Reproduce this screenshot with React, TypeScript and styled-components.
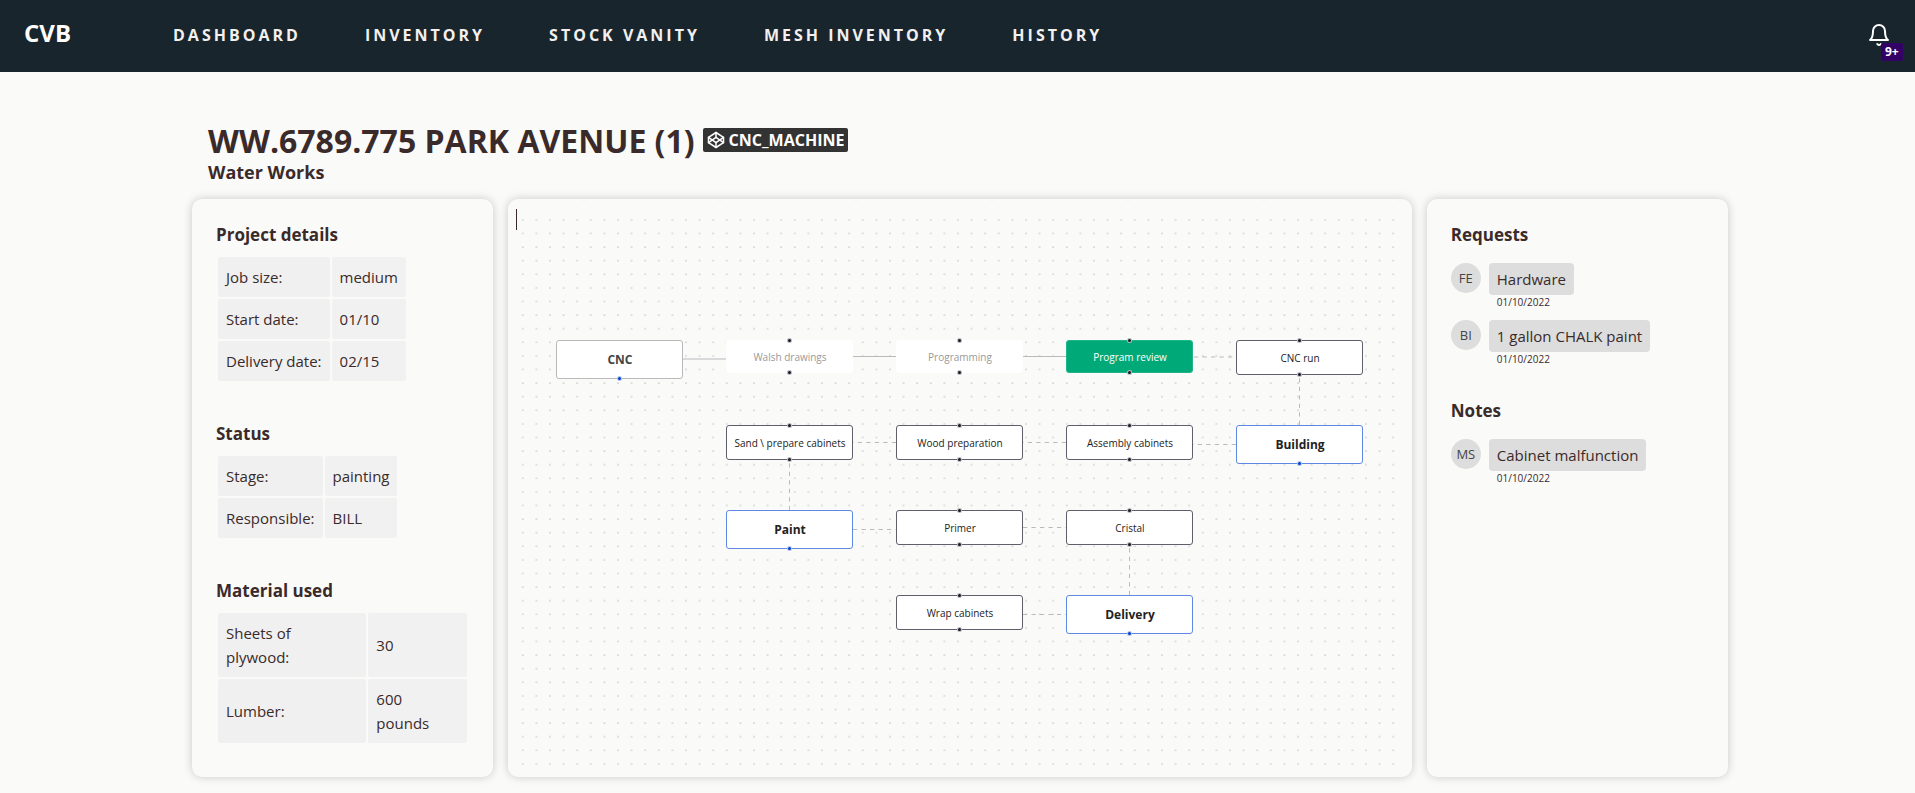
import React from "react";
import styled, { createGlobalStyle, css } from "styled-components";
import { FiBell, FiCodepen } from "react-icons/fi";

const GlobalStyle = createGlobalStyle`
  *, *::before, *::after { box-sizing: border-box; }
  body {
    margin: 0;
    background: #fafaf8;
    color: #3a2a2a;
    font-family: "Segoe UI", "Open Sans", "Noto Sans", sans-serif;
    font-size: 15px;
    line-height: 24px;
  }
`;

const NavBar = styled.header`
  display: flex;
  align-items: center;
  height: 72px;
  padding: 0 24px 2px;
  background: #18252c;
  color: #fff;
`;

const Brand = styled.a`
  width: 149px;
  padding-bottom: 4px;
  color: inherit;
  font-size: 24px;
  font-weight: 700;
  line-height: 32px;
  text-decoration: none;
`;

const NavLinks = styled.nav`
  display: flex;
  flex: 1;
  gap: 64px;
`;

const NavLink = styled.a`
  color: #f3f0ef;
  font-size: 16px;
  font-weight: 700;
  letter-spacing: 3px;
  text-decoration: none;
  text-transform: uppercase;
  white-space: nowrap;
`;

const BellButton = styled.button`
  position: relative;
  display: flex;
  padding: 0;
  border: 0;
  background: none;
  color: #fff;
  cursor: pointer;
`;

const BellCount = styled.span`
  position: absolute;
  top: 20px;
  left: 14px;
  padding: 0 4px;
  border-radius: 2px;
  background: #330066;
  font-family: "Segoe UI", "Open Sans", "Noto Sans", sans-serif;
  font-size: 12px;
  font-weight: 700;
  line-height: 18px;
`;

const Page = styled.main`
  padding: 48px 187px 14px 192px;
`;

const TitleBlock = styled.div`
  padding: 0 16px 16px;
`;

const TitleRow = styled.div`
  display: flex;
  align-items: flex-start;
  gap: 8px;
`;

const Title = styled.h1`
  margin: 0;
  font-size: 32px;
  font-weight: 700;
  line-height: 42px;
`;

const Subtitle = styled.h2`
  margin: 0;
  font-size: 18px;
  font-weight: 700;
  line-height: 21px;
`;

const MachineTag = styled.span`
  display: flex;
  align-items: center;
  gap: 4px;
  margin-top: 8px;
  padding: 0 4px;
  border-radius: 2px;
  background: #333;
  color: #fff;
  font-size: 16px;
  font-weight: 700;
`;

const Columns = styled.div`
  display: grid;
  grid-template-columns: minmax(0, 1fr) minmax(0, 3fr) minmax(0, 1fr);
  gap: 15px;
`;

const Card = styled.section<{ $gap?: number }>`
  display: flex;
  flex-direction: column;
  gap: ${(p) => p.$gap ?? 0}px;
  padding: 24px 24px 32px;
  border-radius: 10px;
  background: #fafaf8;
  box-shadow: 0 0 10px rgba(0, 0, 0, 0.2);
`;

const CanvasCard = styled(Card)`
  padding: 8px;
`;

const GroupTitle = styled.h3`
  margin: 0 0 8px;
  font-size: 17px;
  font-weight: 700;
  line-height: 24px;
`;

const DetailTable = styled.table<{ $full?: boolean }>`
  width: ${(p) => (p.$full ? "100%" : "auto")};
  border-spacing: 2px;
  white-space: pre-line;

  th {
    width: ${(p) => (p.$full ? "60%" : "auto")};
  }
`;

const cell = css`
  padding: 8px;
  border-radius: 2px;
  background: #f1f1f1;
  font-weight: 400;
  text-align: left;
  vertical-align: middle;
`;

const LabelCell = styled.th`
  ${cell}
  background: #f0f0f0;
`;

const ValueCell = styled.td`
  ${cell}
`;

const MessageList = styled.ul`
  display: flex;
  flex-direction: column;
  gap: 10px;
  margin: 0;
  padding: 8px 0 0;
  list-style: none;
`;

const Message = styled.li`
  display: flex;
  gap: 8px;
`;

const Avatar = styled.span`
  display: flex;
  align-items: center;
  justify-content: center;
  width: 30px;
  height: 30px;
  border-radius: 50%;
  background: #ddd;
  color: #444;
  font-size: 13px;
`;

const MessageBody = styled.div`
  display: flex;
  flex-direction: column;
  align-items: flex-start;
`;

const Bubble = styled.span`
  padding: 4px 8px;
  border-radius: 4px;
  background: #ddd;
`;

const MessageDate = styled.time`
  padding: 0 8px;
  font-size: 10px;
  line-height: 15px;
`;

const Canvas = styled.div`
  position: relative;
  display: flex;
  flex: 1;
  align-items: center;
  justify-content: center;
`;

const DotGrid = styled.svg`
  position: absolute;
  inset: 0;
  width: 100%;
  height: 100%;
`;

const Caret = styled.span`
  position: absolute;
  top: 2px;
  left: 0;
  width: 1px;
  height: 21px;
  background: #3a2a2a;
`;

const Stage = styled.div`
  position: relative;
  width: 807px;
  height: 296px;
`;

const EdgeLayer = styled.svg`
  position: absolute;
  inset: 0;
  width: 100%;
  height: 100%;
  fill: none;
  stroke: #b9b9be;
`;

type Kind = "step" | "done" | "active" | "stage" | "start";

const kinds = {
  step: css`
    border-color: #5f5e6b;
  `,
  done: css`
    height: 33px;
    border-color: #fff;
    color: #999;
  `,
  active: css`
    height: 33px;
    border-color: #1fb586;
    background: #00aa78;
    color: #fff;
  `,
  stage: css`
    height: 39px;
    border-color: #5f88e4;
    font-size: 12px;
    font-weight: 700;
  `,
  start: css`
    height: 39px;
    border-color: #b9b9b9;
    color: #444;
    font-size: 12px;
    font-weight: 700;
  `,
};

const Node = styled.div<{ $kind: Kind; $col: number; $row: number }>`
  position: absolute;
  top: ${(p) => p.$row * 85}px;
  left: ${(p) => p.$col * 170}px;
  display: flex;
  align-items: center;
  justify-content: center;
  width: 127px;
  height: 35px;
  border: 1px solid;
  border-radius: 3px;
  background: #fff;
  color: #222;
  font-size: 10px;
  line-height: 14px;
  white-space: nowrap;
  ${(p) => kinds[p.$kind]}
`;

const Handle = styled.span<{ $side: "top" | "bottom"; $blue?: boolean }>`
  position: absolute;
  ${(p) => p.$side}: -3px;
  left: 60px;
  width: 5px;
  height: 5px;
  border: 1px solid rgba(255, 255, 255, 0.7);
  border-radius: 50%;
  background: ${(p) => (p.$blue ? "#0041d0" : "#1a192b")};
`;

const nodes: { label: string; kind: Kind; col: number; row: number }[] = [
  { label: "CNC", kind: "start", col: 0, row: 0 },
  { label: "Walsh drawings", kind: "done", col: 1, row: 0 },
  { label: "Programming", kind: "done", col: 2, row: 0 },
  { label: "Program review", kind: "active", col: 3, row: 0 },
  { label: "CNC run", kind: "step", col: 4, row: 0 },
  { label: "Sand \\ prepare cabinets", kind: "step", col: 1, row: 1 },
  { label: "Wood preparation", kind: "step", col: 2, row: 1 },
  { label: "Assembly cabinets", kind: "step", col: 3, row: 1 },
  { label: "Building", kind: "stage", col: 4, row: 1 },
  { label: "Paint", kind: "stage", col: 1, row: 2 },
  { label: "Primer", kind: "step", col: 2, row: 2 },
  { label: "Cristal", kind: "step", col: 3, row: 2 },
  { label: "Wrap cabinets", kind: "step", col: 2, row: 3 },
  { label: "Delivery", kind: "stage", col: 3, row: 3 },
];

const solidEdges = ["M127 19H170", "M297 16.5H340", "M467 16.5H510"];

const dashedEdges = [
  "M638 17H680",
  "M743.5 85V35",
  "M680 104.5H637",
  "M510 102.5H467",
  "M340 102.5H297",
  "M233.5 170V120",
  "M297 189.5H340",
  "M467 187.5H510",
  "M573.5 255V205",
  "M467 274.5H510",
];

const links = ["Dashboard", "Inventory", "Stock vanity", "Mesh inventory", "History"];

const details = [
  {
    title: "Project details",
    rows: [
      ["Job size:", "medium"],
      ["Start date:", "01/10"],
      ["Delivery date:", "02/15"],
    ],
  },
  {
    title: "Status",
    rows: [
      ["Stage:", "painting"],
      ["Responsible:", "BILL"],
    ],
  },
  {
    title: "Material used",
    full: true,
    rows: [
      ["Sheets of\nplywood:", "30"],
      ["Lumber:", "600\npounds"],
    ],
  },
];

const threads = [
  {
    title: "Requests",
    items: [
      { who: "FE", text: "Hardware", date: "01/10/2022" },
      { who: "BI", text: "1 gallon CHALK paint", date: "01/10/2022" },
    ],
  },
  {
    title: "Notes",
    items: [{ who: "MS", text: "Cabinet malfunction", date: "01/10/2022" }],
  },
];

function Flow() {
  return (
    <Canvas>
      <DotGrid aria-hidden="true">
        <pattern id="dots" x="0" y="6" width="13.6" height="13.6" patternUnits="userSpaceOnUse">
          <circle cx="6.8" cy="6.8" r="0.6" fill="#81818a" />
        </pattern>
        <rect width="100%" height="100%" fill="url(#dots)" />
      </DotGrid>
      <Caret />
      <Stage>
        <EdgeLayer aria-hidden="true">
          {solidEdges.map((d) => (
            <path key={d} d={d} />
          ))}
          {dashedEdges.map((d) => (
            <path key={d} d={d} strokeDasharray="4.25" />
          ))}
        </EdgeLayer>
        {nodes.map((n) => {
          const major = n.kind === "stage" || n.kind === "start";
          return (
            <Node key={n.label} $kind={n.kind} $col={n.col} $row={n.row}>
              {!major && <Handle $side="top" />}
              {n.label}
              <Handle $side="bottom" $blue={major} />
            </Node>
          );
        })}
      </Stage>
    </Canvas>
  );
}

export default function App() {
  return (
    <>
      <GlobalStyle />
      <NavBar>
        <Brand href="#">CVB</Brand>
        <NavLinks>
          {links.map((l) => (
            <NavLink key={l} href="#">
              {l}
            </NavLink>
          ))}
        </NavLinks>
        <BellButton type="button" aria-label="Notifications">
          <FiBell size={24} />
          <BellCount>9+</BellCount>
        </BellButton>
      </NavBar>
      <Page>
        <TitleBlock>
          <TitleRow>
            <Title>WW.6789.775 PARK AVENUE (1)</Title>
            <MachineTag>
              <FiCodepen size={18} />
              CNC_MACHINE
            </MachineTag>
          </TitleRow>
          <Subtitle>Water Works</Subtitle>
        </TitleBlock>
        <Columns>
          <Card $gap={39}>
            {details.map((g) => (
              <div key={g.title}>
                <GroupTitle>{g.title}</GroupTitle>
                <DetailTable $full={g.full}>
                  <tbody>
                    {g.rows.map(([label, value]) => (
                      <tr key={label}>
                        <LabelCell scope="row">{label}</LabelCell>
                        <ValueCell>{value}</ValueCell>
                      </tr>
                    ))}
                  </tbody>
                </DetailTable>
              </div>
            ))}
          </Card>
          <CanvasCard>
            <Flow />
          </CanvasCard>
          <Card $gap={32}>
            {threads.map((t) => (
              <div key={t.title}>
                <GroupTitle>{t.title}</GroupTitle>
                <MessageList>
                  {t.items.map((m) => (
                    <Message key={m.text}>
                      <Avatar>{m.who}</Avatar>
                      <MessageBody>
                        <Bubble>{m.text}</Bubble>
                        <MessageDate>{m.date}</MessageDate>
                      </MessageBody>
                    </Message>
                  ))}
                </MessageList>
              </div>
            ))}
          </Card>
        </Columns>
      </Page>
    </>
  );
}
